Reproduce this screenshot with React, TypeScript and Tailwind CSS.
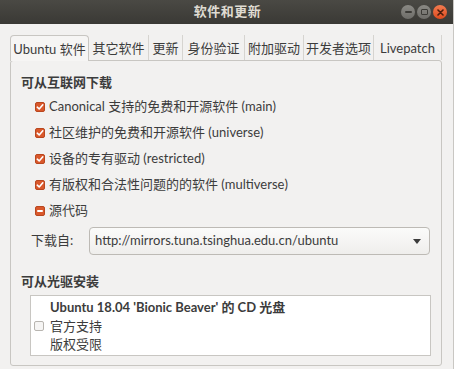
import React from "react";

const font = { fontFamily: 'Lato, "Noto Sans CJK SC", sans-serif' };

function Check({ kind }: { kind: "on" | "mixed" | "off" }) {
  if (kind === "off") {
    return <span className="w-[10px] h-[10px] rounded-[2px] border border-[#b8b5b0] bg-[#f6f5f4] shrink-0" />;
  }
  return (
    <span className="w-[10px] h-[10px] rounded-[2px] bg-[#d9582b] border border-[#b9471f] shrink-0 flex items-center justify-center">
      {kind === "on" ? (
        <svg width="8" height="8" viewBox="0 0 8 8">
          <path d="M1.3 4.2 L3.2 6 L6.8 1.8" stroke="#fff" strokeWidth="1.6" fill="none" strokeLinecap="round" strokeLinejoin="round" />
        </svg>
      ) : (
        <span className="w-[6px] h-[2px] bg-white rounded-[1px]" />
      )}
    </span>
  );
}

const tabs = ["Ubuntu 软件", "其它软件", "更新", "身份验证", "附加驱动", "开发者选项", "Livepatch"];
const tabW = [79, 60, 34, 62, 59, 70, 68];

export default function App() {
  return (
    <div style={font} className="w-[454px] h-[369px] bg-[#f2f1f0] flex flex-col overflow-hidden text-[13px] text-[#3c3c3c] border-r border-[#c9c7c3]">
      <div className="h-[24px] shrink-0 bg-gradient-to-b from-[#4a4944] to-[#3a3935] flex items-center relative">
        <div className="flex-1 text-center text-[#dfdbd2] font-bold text-[13px] tracking-[0.5px] pl-[2px]">软件和更新</div>
        <div className="absolute right-[6px] top-[5px] flex gap-[2px] items-center">
          <span className="w-[14px] h-[14px] rounded-full bg-gradient-to-b from-[#8a8984] to-[#6e6d69] flex items-center justify-center">
            <span className="w-[7px] h-[2px] bg-[#3c3b37] rounded-[1px]" />
          </span>
          <span className="w-[14px] h-[14px] rounded-full bg-gradient-to-b from-[#8a8984] to-[#6e6d69] flex items-center justify-center">
            <span className="w-[7px] h-[6px] border-[1.5px] border-[#3c3b37] rounded-[1px]" />
          </span>
          <span className="w-[14px] h-[14px] rounded-full bg-gradient-to-b from-[#f27b4f] to-[#dd4a1c] flex items-center justify-center">
            <svg width="7" height="7" viewBox="0 0 7 7">
              <path d="M1 1 L6 6 M6 1 L1 6" stroke="#4a1c0c" strokeWidth="1.6" strokeLinecap="round" />
            </svg>
          </span>
        </div>
      </div>

      <div className="flex ml-[10px] mt-[10px] h-[26px] shrink-0 items-end">
        {tabs.map((t, i) =>
          i === 0 ? (
            <div key={t} style={{ width: tabW[i] }} className="h-[26px] pt-[2px] border border-b-0 border-[#c8c6c2] rounded-t-[4px] bg-[#f6f5f4] flex items-center justify-center relative -mb-[1px] z-10">
              {t}
            </div>
          ) : (
            <div key={t} style={{ width: tabW[i] }} className="h-[25px] pt-[2px] border-r border-[#d6d4d0] flex items-center justify-center text-[#3c3c3c]">
              {t}
            </div>
          )
        )}
      </div>

      <div className="ml-[10px] mr-[11px] h-[306px] border border-[#c8c6c2] rounded-[3px] bg-[#f2f1f0] flex flex-col shrink-0">
        <div className="h-[22px] mt-[11px] pl-[10px] flex items-center font-bold">可从互联网下载</div>
        {[
          ["on", "Canonical 支持的免费和开源软件 (main)"],
          ["on", "社区维护的免费和开源软件 (universe)"],
          ["on", "设备的专有驱动 (restricted)"],
          ["on", "有版权和合法性问题的的软件 (multiverse)"],
          ["mixed", "源代码"],
        ].map(([k, label]) => (
          <div key={label} className="h-[26px] pl-[24px] flex items-center gap-[4px]">
            <Check kind={k as "on" | "mixed"} />
            <span>{label}</span>
          </div>
        ))}
        <div className="flex items-center mt-[3px] pl-[20px] pr-[11px]">
          <span className="w-[58px]">下载自:</span>
          <div className="flex-1 h-[28px] border border-[#bdbab5] rounded-[4px] bg-gradient-to-b from-[#fbfbfa] to-[#efeeec] flex items-center pl-[5px] pr-[8px]">
            <span className="flex-1">http://mirrors.tuna.tsinghua.edu.cn/ubuntu</span>
            <svg width="8" height="5" viewBox="0 0 8 5">
              <path d="M0 0 H8 L4 5 Z" fill="#3c3c3c" />
            </svg>
          </div>
        </div>
        <div className="h-[22px] mt-[16px] pl-[10px] flex items-center font-bold">可从光驱安装</div>
        <div className="ml-[19px] mr-[10px] mt-[2px] h-[61px] border border-[#c8c6c2] bg-white flex items-center pl-[3px]">
          <Check kind="off" />
          <div className="flex flex-col pl-[6px] leading-[18.5px] pt-[1px]">
            <span className="font-bold">Ubuntu 18.04 'Bionic Beaver' 的 CD 光盘</span>
            <span>官方支持</span>
            <span>版权受限</span>
          </div>
        </div>
      </div>
    </div>
  );
}
